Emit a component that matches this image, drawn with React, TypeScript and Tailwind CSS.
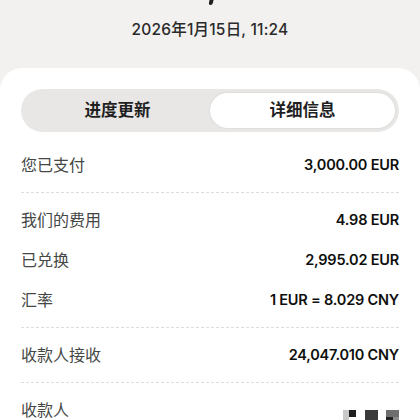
import React from "react";

const rows1 = [
  { label: "我们的费用", value: "4.98 EUR" },
  { label: "已兑换", value: "2,995.02 EUR" },
  { label: "汇率", value: "1 EUR = 8.029 CNY" },
];

function Row({ label, value }: { label: string; value: React.ReactNode }) {
  return (
    <div className="flex h-[40px] items-center justify-between">
      <span className="text-[16px] text-[#454745]">{label}</span>
      <span className="text-[14.5px] font-semibold tracking-[-0.2px] text-[#0e0f0c]">{value}</span>
    </div>
  );
}

function Divider() {
  return <div className="my-[7px] border-t border-dashed border-[#dcdcd8]" />;
}

function Mosaic() {
  return (
    <div className="flex items-start">
      <div className="flex flex-col">
        <div className="flex">
          <div className="h-[7px] w-[6px] bg-[#c9c9c7]" />
          <div className="h-[7px] w-[7px] bg-[#1e1e1e]" />
        </div>
        <div className="h-[7px] w-[6px] bg-[#c9c9c7]" />
      </div>
      <div className="ml-[9px] h-[14px] w-[13px] bg-[#3a3a3a]" />
      <div className="ml-[8px] flex flex-col">
        <div className="h-[7px] w-[13px] bg-[#6e6e6e]" />
        <div className="flex">
          <div className="h-[7px] w-[7px] bg-[#222]" />
          <div className="h-[7px] w-[6px] bg-[#8a8a8a]" />
        </div>
      </div>
    </div>
  );
}

export default function App() {
  return (
    <div
      className="h-[420px] w-[420px] overflow-hidden bg-[#f2f1ef]"
      style={{ fontFamily: "Inter, 'Noto Sans CJK SC', sans-serif" }}
    >
      <div className="flex h-[8px] justify-center">
        <div className="ml-[2px] h-[5px] w-[4px] -skew-x-12 rounded-b-[2px] bg-[#1f1f1f]" />
      </div>
      <div className="mt-[10px] text-center text-[15.5px] font-medium tracking-[0.2px] text-[#2a2a2a]">
        2026年1月15日, 11:24
      </div>
      <div className="mt-[27px] h-[400px] rounded-t-[22px] bg-white px-[21px] pt-[21px]">
        <div className="flex h-[43px] items-center rounded-full bg-[#e8e7e5] p-[4px]">
          <div className="flex flex-1 items-center justify-center text-[16.5px] font-semibold text-[#1f1f1f]">
            进度更新
          </div>
          <div className="flex h-[35px] flex-1 items-center justify-center rounded-full bg-white text-[16.5px] font-semibold text-[#1f1f1f] shadow-[0_0_2px_rgba(0,0,0,0.12)]">
            详细信息
          </div>
        </div>
        <div className="mt-[13px]">
          <Row label="您已支付" value="3,000.00 EUR" />
          <Divider />
          {rows1.map((r) => (
            <Row key={r.label} label={r.label} value={r.value} />
          ))}
          <Divider />
          <Row label="收款人接收" value="24,047.010 CNY" />
          <Divider />
          <div className="flex h-[40px] items-center justify-between">
            <span className="text-[16px] text-[#454745]">收款人</span>
            <div className="mb-[-14px]">
              <Mosaic />
            </div>
          </div>
        </div>
      </div>
    </div>
  );
}
